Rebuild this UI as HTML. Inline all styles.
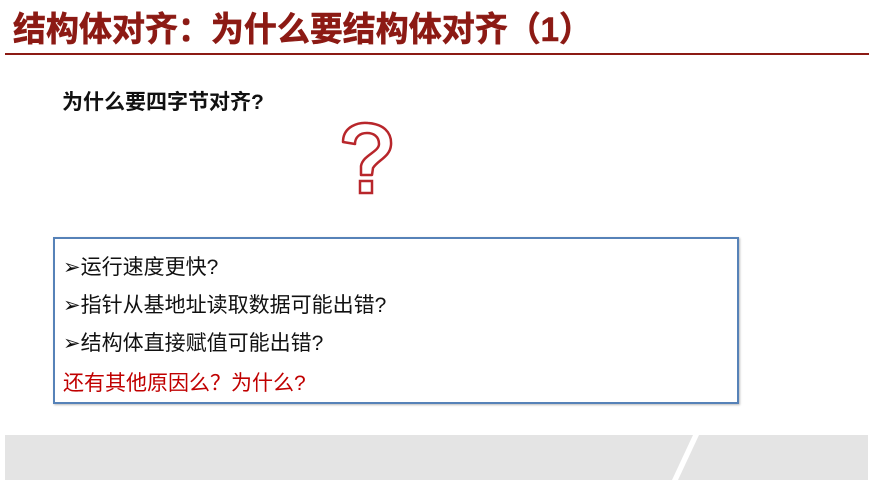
<!DOCTYPE html>
<html><head><meta charset="utf-8"><style>
html,body{margin:0;padding:0;background:#fff;width:874px;height:485px;overflow:hidden;position:relative}
.t{position:absolute;left:13px;top:2px;font:bold 34px "Liberation Sans","Noto Sans CJK SC",sans-serif;color:#8c1a14;white-space:nowrap;transform:scaleX(0.97);transform-origin:left;-webkit-text-stroke:0.6px #8c1a14}
.line{position:absolute;left:5px;right:5px;top:53px;height:2px;background:#8c1a14}
.sub{position:absolute;left:62px;top:86px;font:bold 21px "Liberation Sans","Noto Sans CJK SC",sans-serif;color:#111;white-space:nowrap}
.box{position:absolute;left:53px;top:237px;width:682px;height:163px;border:2px solid #5682b8;box-shadow:1px 1px 2px #bbb}
.l{position:absolute;left:8px;font:21px "Liberation Sans","Noto Sans CJK SC",sans-serif;color:#111;white-space:nowrap}
.band{position:absolute;left:5px;width:863px;top:435px;height:45px;background:#e4e4e4}
</style></head><body>
<div class="t">结构体对齐：为什么要结构体对齐（1）</div>
<div class="line"></div>
<div class="sub">为什么要四字节对齐?</div>
<svg style="position:absolute;left:335px;top:120px" width="65" height="80" viewBox="0 0 65 80">
<path d="M8 22 C8 6 24 2 33 3 C48 4 57 12 56 25 C55 37 43 40 38 48 L37 55 L26 55 L26 46 C28 35 44 32 44 24 C44 16 38 13 32 13 C25 13 20 17 20 24 Z" fill="#fff" stroke="#b8262b" stroke-width="2.5" stroke-linejoin="round"/>
<rect x="25" y="61" width="12" height="12" fill="#fff" stroke="#b8262b" stroke-width="2.5"/>
</svg>
<div class="box">
<div class="l" style="top:12px">➢运行速度更快?</div>
<div class="l" style="top:50px">➢指针从基地址读取数据可能出错?</div>
<div class="l" style="top:88px">➢结构体直接赋值可能出错?</div>
<div class="l" style="top:128px;left:8px;color:#c00000">还有其他原因么？为什么?</div>
</div>
<div class="band"></div>
<svg style="position:absolute;left:665px;top:435px" width="40" height="45"><polygon points="28,0 34,0 13,45 7,45" fill="#fff"/></svg>
</body></html>
